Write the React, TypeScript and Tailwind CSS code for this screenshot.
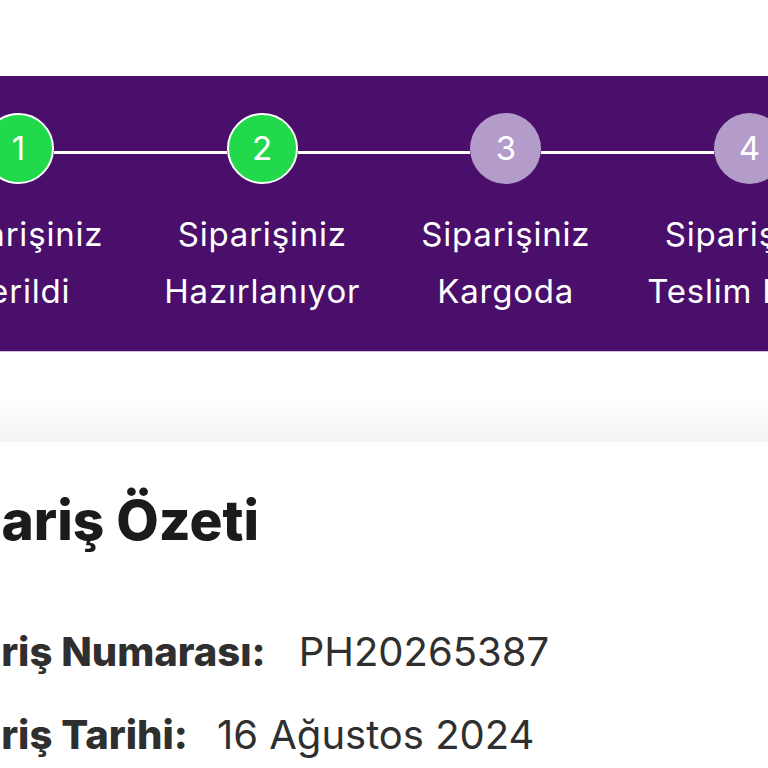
import React from "react"

const steps = [
  { n: 1, lines: ["Siparişiniz", "Verildi"], done: true },
  { n: 2, lines: ["Siparişiniz", "Hazırlanıyor"], done: true },
  { n: 3, lines: ["Siparişiniz", "Kargoda"], done: false },
  { n: 4, lines: ["Siparişiniz", "Teslim Edildi"], done: false },
]

function Circle({ n, done }: { n: number; done: boolean }) {
  return (
    <div
      className={`flex h-[71px] w-[71px] shrink-0 items-center justify-center rounded-full text-[33px] leading-none text-white ${
        done ? "border-2 border-white bg-[#21d94b]" : "bg-[#b39cca]"
      }`}
    >
      {n}
    </div>
  )
}

export default function App() {
  return (
    <div
      className="min-h-screen w-full overflow-hidden bg-white"
      style={{ fontFamily: "Inter, 'Noto Sans', sans-serif" }}
    >
      {/* top white gap */}
      <div className="h-[76px]" />

      {/* order progress band */}
      <div className="bg-[#4a0f6b] pt-[37px] pb-[31px] border-b border-[#cdbfd8]">
        <div className="ml-[-17px] flex w-[802px] items-start">
          {steps.map((s, i) => (
            <React.Fragment key={s.n}>
              <Circle n={s.n} done={s.done} />
              {i < steps.length - 1 && (
                <div className="mt-[38px] h-[2.5px] flex-1 bg-white" />
              )}
            </React.Fragment>
          ))}
        </div>
        <div className="ml-[-103px] mt-[22px] flex">
          {steps.map((s) => (
            <div
              key={s.n}
              className="w-[243.5px] shrink-0 text-center text-[33px] leading-[57px] tracking-[0.8px] whitespace-nowrap text-white"
            >
              <div>{s.lines[0]}</div>
              <div>{s.lines[1]}</div>
            </div>
          ))}
        </div>
      </div>

      {/* soft gray divider */}
      <div className="h-[90px] bg-gradient-to-b from-white via-white to-[#f3f3f3]" />

      {/* summary */}
      <div className="ml-[-86px] pt-[51px] text-[#2f2f2f]">
        <h1 className="text-[55px] font-extrabold leading-none text-[#1b1b1b]">
          Sipariş Özeti
        </h1>
        <div className="mt-[84px] flex flex-col gap-[43px] text-[40px] leading-none">
          <div className="flex gap-[33px] whitespace-nowrap">
            <span className="font-extrabold">Sipariş Numarası:</span>
            <span>PH20265387</span>
          </div>
          <div className="flex gap-[29px] whitespace-nowrap">
            <span className="font-extrabold">Sipariş Tarihi:</span>
            <span>16 Ağustos 2024</span>
          </div>
        </div>
      </div>
    </div>
  )
}
